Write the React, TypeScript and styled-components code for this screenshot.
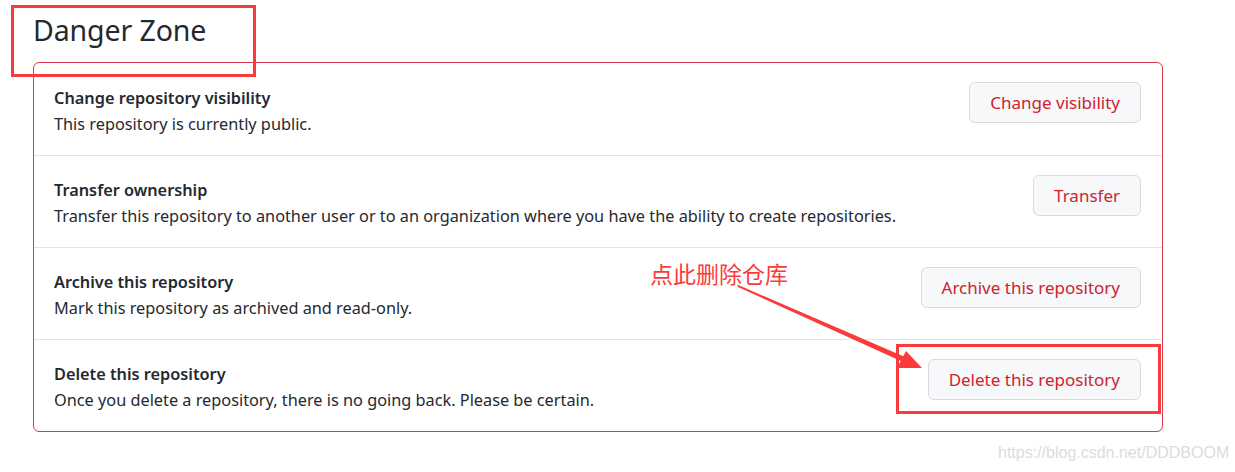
import React from 'react'
import styled, { createGlobalStyle } from 'styled-components'

const GlobalStyle = createGlobalStyle`
  html, body {
    margin: 0;
    padding: 0;
    background: #ffffff;
  }
  body {
    font-family: 'Noto Sans', 'Open Sans', sans-serif;
    color: #24292f;
  }
`

type Setting = {
  title: string
  description: string
  action: string
}

const settings: Setting[] = [
  {
    title: 'Change repository visibility',
    description: 'This repository is currently public.',
    action: 'Change visibility',
  },
  {
    title: 'Transfer ownership',
    description:
      'Transfer this repository to another user or to an organization where you have the ability to create repositories.',
    action: 'Transfer',
  },
  {
    title: 'Archive this repository',
    description: 'Mark this repository as archived and read-only.',
    action: 'Archive this repository',
  },
  {
    title: 'Delete this repository',
    description:
      'Once you delete a repository, there is no going back. Please be certain.',
    action: 'Delete this repository',
  },
]

const App = () => {
  return (
    <Page>
      <GlobalStyle />
      <Heading>Danger Zone</Heading>
      <Box>
        {settings.map((item) => (
          <Row key={item.title}>
            <Info>
              <Title>{item.title}</Title>
              <Description>{item.description}</Description>
            </Info>
            <DangerButton>{item.action}</DangerButton>
          </Row>
        ))}
      </Box>

      <Mark $left={11} $top={5} $width={245} $height={72} />
      <Mark $left={896} $top={344} $width={265} $height={70} />
      <Note>点此删除仓库</Note>
      <Arrow width="1235" height="472" viewBox="0 0 1235 472">
        <polygon points="737,284.5 738,287 903,362 905,357" fill="#fb3b3b" />
        <polygon points="922,368 897,368 906,351" fill="#fb3b3b" />
      </Arrow>
      <Watermark>https://blog.csdn.net/DDDBOOM</Watermark>
    </Page>
  )
}

const Page = styled.div`
  position: relative;
  width: 1235px;
  height: 472px;
  overflow: hidden;
  padding: 0 0 0 33px;
  box-sizing: border-box;
`

const Heading = styled.h2`
  margin: 0;
  padding-top: 11px;
  height: 62px;
  box-sizing: border-box;
  font-size: 28.5px;
  font-weight: 400;
  line-height: 38px;
  color: #24292f;
  letter-spacing: -0.1px;
`

const Box = styled.div`
  width: 1130px;
  box-sizing: border-box;
  border: 1px solid #d73a49;
  border-radius: 6px;
`

const Row = styled.div`
  display: flex;
  align-items: center;
  justify-content: space-between;
  height: 92px;
  box-sizing: border-box;
  padding: 0 21px 0 20px;

  & + & {
    border-top: 1px solid #e1e4e8;
  }
`

const Info = styled.div`
  display: flex;
  flex-direction: column;
  gap: 2px;
  padding-top: 3px;
`

const Title = styled.div`
  font-size: 16.3px;
  font-weight: 600;
  line-height: 24px;
  color: #24292f;
`

const Description = styled.div`
  font-size: 16.3px;
  line-height: 24px;
  color: #24292f;
`

const DangerButton = styled.button`
  align-self: flex-start;
  margin-top: 19px;
  height: 41px;
  padding: 0 20px;
  font-family: 'Noto Sans', 'Open Sans', sans-serif;
  font-size: 17px;
  font-weight: 400;
  color: #cf222e;
  background: #f6f8fa;
  border: 1px solid #d8dadd;
  border-radius: 6px;
  cursor: pointer;
`

const Mark = styled.div<{
  $left: number
  $top: number
  $width: number
  $height: number
}>`
  position: absolute;
  left: ${(p) => p.$left}px;
  top: ${(p) => p.$top}px;
  width: ${(p) => p.$width}px;
  height: ${(p) => p.$height}px;
  box-sizing: border-box;
  border: 3px solid #fb3b3b;
  pointer-events: none;
`

const Note = styled.div`
  position: absolute;
  left: 650px;
  top: 258px;
  font-family: 'Noto Sans CJK SC', sans-serif;
  font-size: 23px;
  line-height: 30px;
  color: #fb3b3b;
`

const Arrow = styled.svg`
  position: absolute;
  left: 0;
  top: 0;
  pointer-events: none;
`

const Watermark = styled.div`
  position: absolute;
  left: 998px;
  top: 443px;
  font-family: 'Liberation Sans', Arial, sans-serif;
  font-size: 16px;
  line-height: 20px;
  color: #dcdcdc;
`

export default App
